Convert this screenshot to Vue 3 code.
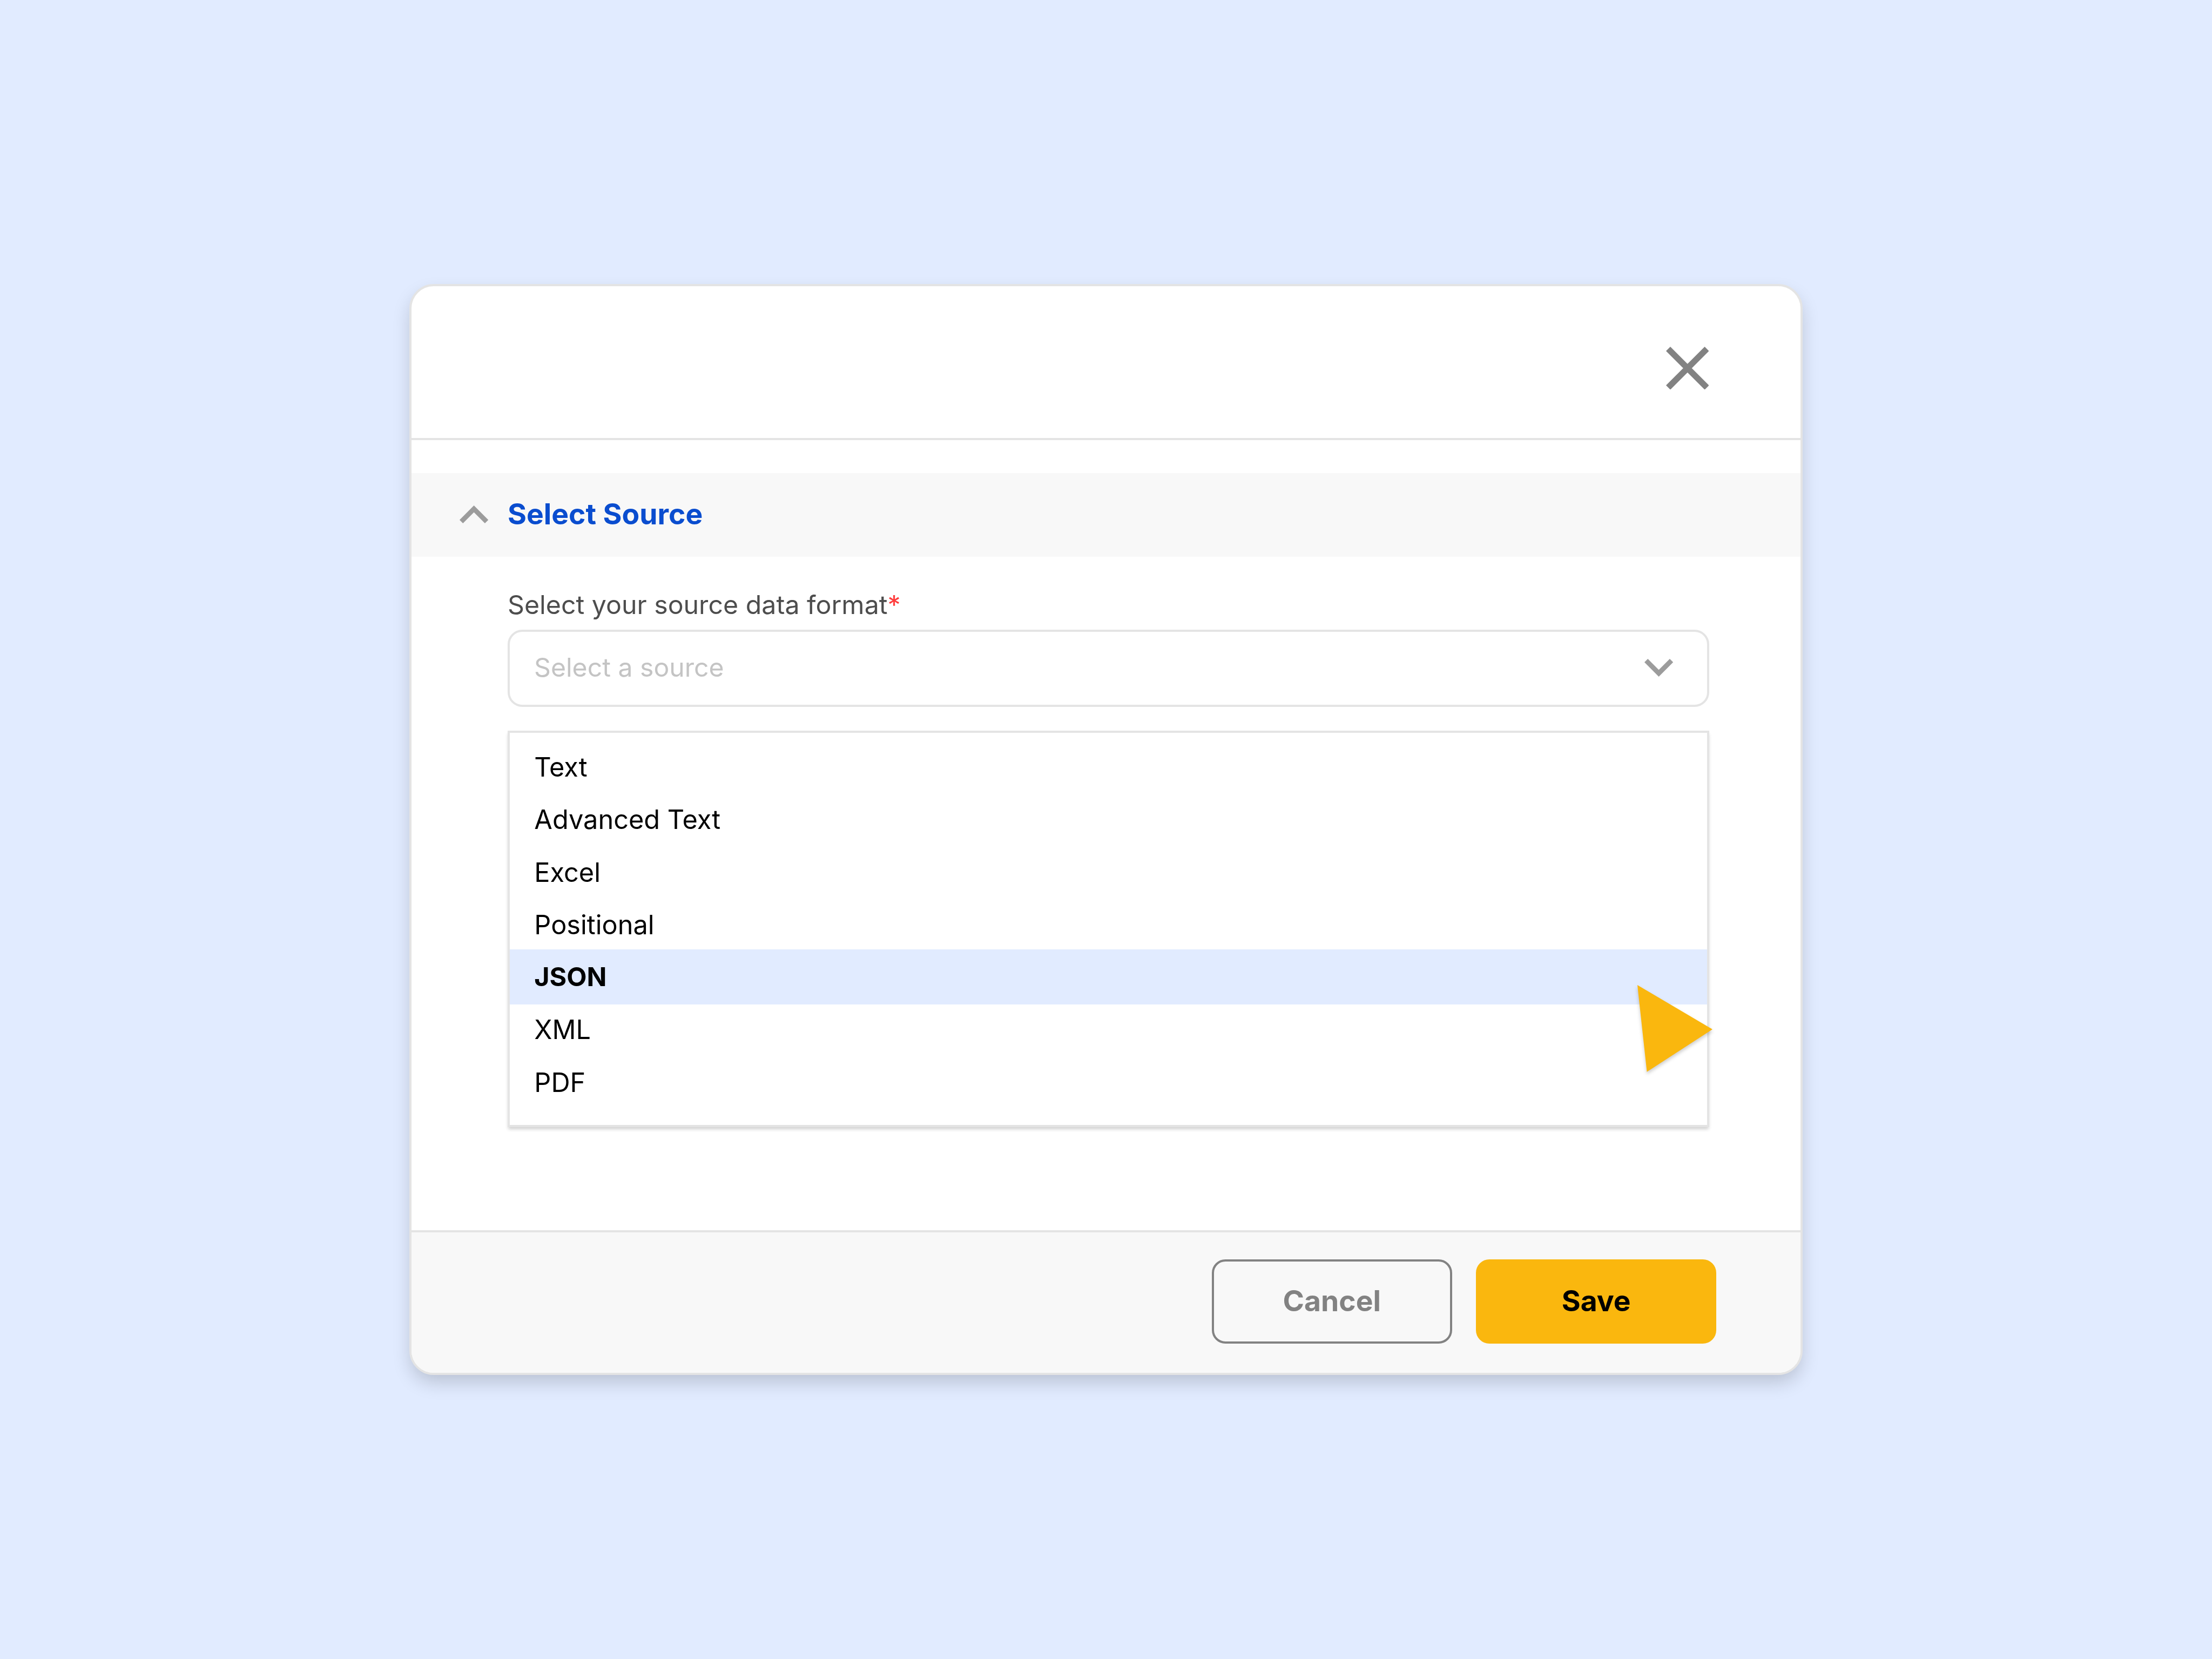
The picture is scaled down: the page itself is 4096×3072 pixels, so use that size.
<script setup>
import { ref } from 'vue'

const formats = ['Text', 'Advanced Text', 'Excel', 'Positional', 'JSON', 'XML', 'PDF']
const active = ref('JSON')
</script>

<template>
  <main class="page">
    <section class="modal">
      <header class="modal-header">
        <svg class="close" viewBox="0 0 79.6 79.6">
          <path d="M4 4 75.6 75.6M75.6 4 4 75.6" />
        </svg>
      </header>

      <div class="section-bar">
        <svg class="chevron" viewBox="0 0 53.2 33">
          <path d="M3.13 29.87 26.6 6.3 50.07 29.87" />
        </svg>
        <h2 class="section-title">Select Source</h2>
      </div>

      <div class="form">
        <label class="label">Select your source data format<span class="required">*</span></label>
        <div class="select">
          <span class="placeholder">Select a source</span>
          <svg class="chevron" viewBox="0 0 53.2 33">
            <path d="M3.13 3.13 26.6 26.7 50.07 3.13" />
          </svg>
        </div>
        <ul class="menu">
          <li
            v-for="format in formats"
            :key="format"
            class="option"
            :class="{ active: format === active }"
            @mouseenter="active = format"
          >
            {{ format }}
          </li>
          <svg class="pointer" viewBox="0 0 139 160.7">
            <path d="M0 0 139 82.1 17.6 160.7Z" />
          </svg>
        </ul>
      </div>

      <footer class="modal-footer">
        <button class="button cancel">Cancel</button>
        <button class="button save">Save</button>
      </footer>
    </section>
  </main>
</template>

<style>
body {
  margin: 0;
  background: #e1ebff;
}
</style>

<style scoped>
.page {
  width: 4096px;
  height: 3072px;
  display: flex;
  align-items: center;
  justify-content: center;
  overflow: hidden;
  background: #e1ebff;
  font-family: Inter, "Liberation Sans", sans-serif;
  font-size: 48.7px;
  color: #000;
}

.modal {
  box-sizing: border-box;
  width: 2580px;
  height: 2020px;
  display: flex;
  flex-direction: column;
  border: 4px solid #e4e4e4;
  border-radius: 45px;
  background: #fff;
  box-shadow: 0 16px 34px -3px rgba(0, 0, 0, 0.18);
}

.modal-header {
  box-sizing: border-box;
  height: 285px;
  display: flex;
  justify-content: flex-end;
  align-items: flex-start;
  padding: 111.7px 169.6px 0 0;
  border-bottom: 4px solid #e4e4e4;
}

.close {
  width: 79.6px;
  height: 79.6px;
  fill: none;
  stroke: #828282;
  stroke-width: 11.3;
}

.section-bar {
  box-sizing: border-box;
  height: 155px;
  margin-top: 61px;
  padding: 0 89.2px 3px;
  display: flex;
  align-items: center;
  gap: 35.6px;
  background: #f8f8f8;
}

.chevron {
  width: 53.2px;
  height: 33px;
  fill: none;
  stroke: #9c9c9c;
  stroke-width: 8.85;
}

.section-title {
  margin: 0;
  font-size: 53.4px;
  line-height: 66px;
  font-weight: 700;
  color: #0a4dcf;
}

.form {
  flex: 1;
  display: flex;
  flex-direction: column;
  padding: 59px 169px 0 178px;
}

.label {
  font-size: 48.25px;
  line-height: 60px;
  color: #4d4d4d;
}

.required {
  color: #ff3b3b;
}

.select {
  box-sizing: border-box;
  height: 143px;
  margin-top: 16px;
  padding: 0 63px 3px 45px;
  display: flex;
  align-items: center;
  justify-content: space-between;
  border: 4px solid #e4e4e4;
  border-radius: 27px;
  background: #fff;
}

.placeholder {
  padding-bottom: 2px;
  font-size: 48.15px;
  color: #c4c4c4;
}

.menu {
  position: relative;
  box-sizing: border-box;
  height: 734px;
  margin: 44px 0 0;
  padding: 14px 0 0;
  list-style: none;
  border: 4px solid #e4e4e4;
  background: #fff;
  box-shadow: 0 5px 6px -1px rgba(0, 0, 0, 0.18);
}

.option {
  height: 97.28px;
  padding-left: 45.3px;
  line-height: 99.5px;
}

.option.active {
  height: 102px;
  margin: -2.36px 0;
  line-height: 102.6px;
  font-weight: 700;
  font-size: 48.4px;
  background: #e1ebff;
}

/* Floats over the list and its right border */
.pointer {
  position: absolute;
  top: 466.6px;
  right: -10.2px;
  width: 139px;
  height: 160.7px;
  overflow: visible;
  fill: #fab70e;
  filter: drop-shadow(0 4px 3px rgba(0, 0, 0, 0.2));
}

.modal-footer {
  box-sizing: border-box;
  height: 264px;
  display: flex;
  justify-content: flex-end;
  align-items: flex-start;
  gap: 44.5px;
  padding: 49.6px 155.8px 0 0;
  border-top: 4px solid #e4e4e4;
  border-radius: 0 0 41px 41px;
  background: #f8f8f8;
}

.button {
  box-sizing: border-box;
  width: 445px;
  height: 156px;
  padding: 0 0 2px;
  border: 4px solid transparent;
  border-radius: 25px;
  font: 700 53.4px/66px Inter, "Liberation Sans", sans-serif;
}

.cancel {
  border-color: #828282;
  background: transparent;
  color: #828282;
}

.save {
  border-color: #fab70e;
  background: #fab70e;
  color: #000;
}
</style>
